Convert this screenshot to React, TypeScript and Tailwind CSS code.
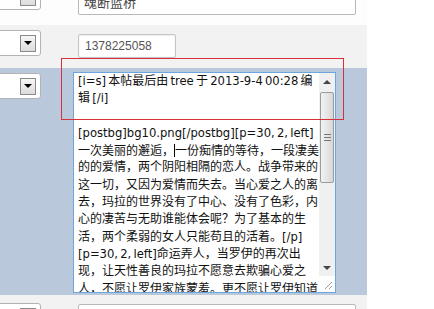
const lines = [
  "[i=s] 本帖最后由 tree 于 2013-9-4 00:28 编",
  "辑 [/i]",
  "",
  "[postbg]bg10.png[/postbg][p=30, 2, left]",
  "CARET",
  "的的爱情，两个阴阳相隔的恋人。战争带来的",
  "这一切，又因为爱情而失去。当心爱之人的离",
  "去，玛拉的世界没有了中心、没有了色彩，内",
  "心的凄苦与无助谁能体会呢？为了基本的生",
  "活，两个柔弱的女人只能苟且的活着。[/p]",
  "[p=30, 2, left]命运弄人，当罗伊的再次出",
  "现，让天性善良的玛拉不愿意去欺骗心爱之",
  "人，不愿让罗伊家族蒙羞。更不愿让罗伊知道",
];

// latin runs are a touch narrower than cjk ones in the original
const Line = ({ text }: { text: string }) => (
  <div className="h-[17.3px] whitespace-pre">
    {text.split(/([\x00-\x7f]+)/).map((seg, i) =>
      /^[\x00-\x7f]+$/.test(seg) ? (
        <span key={i} className="text-[11.6px] [word-spacing:-1.5px]">
          {seg}
        </span>
      ) : (
        <span key={i}>{seg}</span>
      )
    )}
  </div>
);

const SelectBox = () => (
  <div className="ml-[-12px] flex h-[26px] w-[53px] items-center justify-end rounded-[3px] border border-[#b3b3b3] bg-white pr-[4px]">
    <div className="flex h-[17px] w-[16px] items-center justify-center border border-[#8a8a8a] bg-gradient-to-b from-[#f6f6f6] to-[#dcdcdc]">
      <div className="h-0 w-0 border-x-[4px] border-t-[4px] border-x-transparent border-t-black" />
    </div>
  </div>
);

const Arrow = ({ up }: { up?: boolean }) => (
  <div
    className={
      up
        ? "h-0 w-0 border-x-[4px] border-b-[4px] border-x-transparent border-b-[#444]"
        : "h-0 w-0 border-x-[4px] border-t-[4px] border-x-transparent border-t-[#444]"
    }
  />
);

const App = () => {
  return (
    <div className="relative h-[309px] w-[434px] overflow-hidden bg-white font-['Liberation_Sans','Noto_Sans_CJK_SC',sans-serif]">
      <div className="flex w-[367px] flex-col">
        {/* row 1 */}
        <div className="flex h-[25px] bg-[#fdfdfd]">
          <div className="mt-[-16px] w-[78px]">
            <SelectBox />
          </div>
          <div className="mt-[-10px] flex h-[25px] w-[278px] items-center rounded-[2px] border border-[#b8b8b8] bg-white pl-[5px] text-[13px] text-[#444]">
            魂断蓝桥
          </div>
        </div>
        {/* row 2 */}
        <div className="flex h-[43px] bg-[#f2f2f2]">
          <div className="mt-[5px] w-[78px]">
            <SelectBox />
          </div>
          <div className="mt-[9px] flex h-[24px] w-[98px] items-center rounded-[2px] border border-[#c4c4c4] bg-white pl-[6px] text-[12px] text-[#555] shadow-[inset_0_1px_2px_rgba(0,0,0,0.08)]">
            1378225058
          </div>
        </div>
        {/* row 3 */}
        <div className="flex h-[227px] bg-[#b9c9db]">
          <div className="mt-[5px] w-[73px]">
            <SelectBox />
          </div>
          <div className="mt-[4px] flex h-[221px] w-[263px] border border-[#6ea5da] bg-white">
            <div className="flex-1 overflow-hidden pl-[4px] font-['DejaVu_Sans','Noto_Sans_CJK_SC',sans-serif] text-[12px] leading-[17.3px] text-[#111]">
              {lines.map((l, i) =>
                l === "CARET" ? (
                  <div key={i} className="h-[17.3px] whitespace-nowrap">
                    一次美丽的邂逅，
                    <span className="inline-block h-[13px] w-px translate-y-[2px] bg-black align-baseline" />
                    一份痴情的等待，一段凄美
                  </div>
                ) : (
                  <Line key={i} text={l} />
                )
              )}
            </div>
            {/* scrollbar */}
            <div className="flex w-[16px] flex-col bg-[#f0f0f0]">
              <div className="flex h-[17px] items-center justify-center">
                <Arrow up />
              </div>
              <div className="mx-[1px] mt-[2px] flex h-[91px] items-center justify-center rounded-[2px] border border-[#9c9c9c] bg-gradient-to-r from-[#f2f2f2] via-[#e6e6e6] to-[#d6d6d6]">
                <div className="flex flex-col gap-[2px]">
                  <div className="h-px w-[7px] bg-[#777]" />
                  <div className="h-px w-[7px] bg-[#777]" />
                  <div className="h-px w-[7px] bg-[#777]" />
                </div>
              </div>
              <div className="flex-1" />
              <div className="flex h-[17px] items-center justify-center">
                <Arrow />
              </div>
              <div className="relative h-[16px] bg-white">
                <svg width="16" height="16" className="absolute left-0 top-0">
                  <line x1="13" y1="6" x2="6" y2="13" stroke="#999" />
                  <line x1="13" y1="10" x2="10" y2="13" stroke="#999" />
                </svg>
              </div>
            </div>
          </div>
        </div>
        {/* row 4 */}
        <div className="flex h-[14px] bg-[#f2f2f2]">
          <div className="mt-[8px] w-[78px]">
            <SelectBox />
          </div>
          <div className="mt-[9px] h-[24px] w-[278px] rounded-[2px] border border-[#b8b8b8] bg-white" />
        </div>
      </div>
      {/* annotation */}
      <div className="absolute left-[61px] top-[58px] h-[62px] w-[283px] border border-[#d8303a]" />
    </div>
  );
};

export default App;
